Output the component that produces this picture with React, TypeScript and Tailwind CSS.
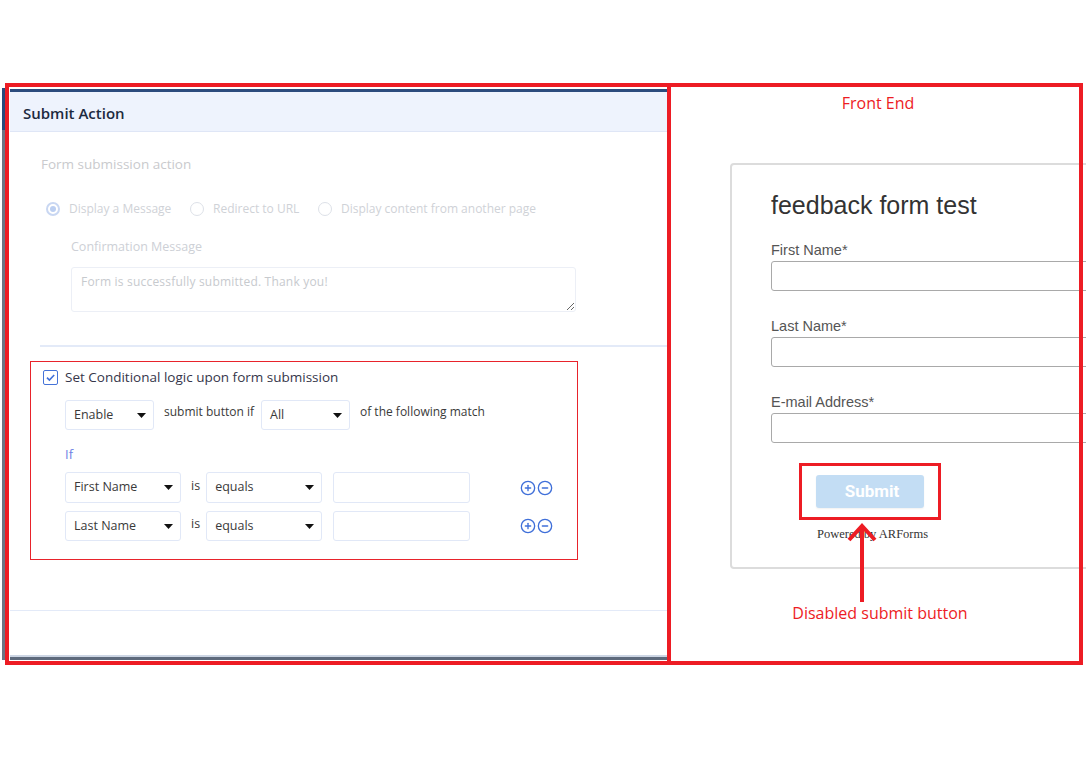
import React from 'react';
import { CirclePlus, CircleMinus } from 'lucide-react';

function Caret() {
  return (
    <svg width="9" height="5" viewBox="0 0 9 5" className="shrink-0">
      <path d="M0 0h9L4.5 5z" fill="#111" />
    </svg>
  );
}

function Select({ label, width, height }: { label: string; width: string; height: string }) {
  return (
    <div
      className={`flex items-center justify-between rounded-[3px] border border-[#e1e8f7] bg-white pl-[8px] pr-[7px] text-[12.5px] text-[#3a3a3a] ${width} ${height}`}
    >
      <span>{label}</span>
      <Caret />
    </div>
  );
}

function Radio({ checked }: { checked?: boolean }) {
  return (
    <span
      className={`flex items-center justify-center w-[14px] h-[14px] rounded-full shrink-0 ${
        checked ? 'border-2 border-[#c9d7f2]' : 'border border-[#dde1e8]'
      }`}
    >
      {checked && <span className="w-[6px] h-[6px] rounded-full bg-[#bccff1]" />}
    </span>
  );
}

function ConditionRow({ field, height }: { field: string; height: string }) {
  return (
    <div className="flex items-center">
      <Select label={field} width="w-[116px]" height={height} />
      <span className="ml-[10px] -mt-[3px] text-[12.5px] text-[#3a3a3a]">is</span>
      <div className="ml-[6px]">
        <Select label="equals" width="w-[116px]" height={height} />
      </div>
      <div className={`ml-[11px] w-[137px] rounded-[3px] border border-[#e1e8f7] bg-white ${height}`} />
      <div className="ml-[50px] flex items-center gap-[1px] text-[#3f6fd9]">
        <CirclePlus size={16} strokeWidth={2} />
        <CircleMinus size={16} strokeWidth={2} />
      </div>
    </div>
  );
}

export default function App(): React.JSX.Element {
  return (
    <div className="relative w-[1086px] h-[768px] overflow-hidden bg-white">
      <div className="mt-[83px] flex h-[582px]">
        {/* underlying admin page edge */}
        <div className="w-[10px] shrink-0 pt-[5px] pl-[2px]">
          <div className="w-[3px] h-[42px] bg-[#2b4b7d]" />
          <div className="w-[3px] h-[530px] bg-[#6c7585]" />
        </div>

        {/* Submit Action panel */}
        <div className="w-[658px] shrink-0 flex flex-col bg-white font-['Open_Sans','Noto_Sans',sans-serif]">
          <div className="h-[6px]" />
          <div className="h-[3px] bg-[#2b4b7d]" />
          <div className="h-[40px] bg-[#eef3fd] border-b border-[#dfe6f6] flex items-center pl-[13px] pt-[3px] text-[15px] font-semibold text-[#1c2a3f]">
            Submit Action
          </div>

          <div className="pl-[31px]">
            <p className="mt-[22px] text-[13.5px] leading-[20px] font-medium text-[#c9cacd]">Form submission action</p>
            <div className="mt-[25px] flex items-center h-[20px] pl-[5px] text-[12px] text-[#cfd2d7]">
              <div className="w-[144px] flex items-center">
                <Radio checked />
                <span className="ml-[9px]">Display a Message</span>
              </div>
              <div className="w-[128px] flex items-center">
                <Radio />
                <span className="ml-[9px]">Redirect to URL</span>
              </div>
              <div className="flex items-center">
                <Radio />
                <span className="ml-[9px]">Display content from another page</span>
              </div>
            </div>
            <div className="pl-[30px]">
              <p className="mt-[19px] text-[12.5px] leading-[18px] text-[#cdd0d6]">Confirmation Message</p>
              <textarea
                readOnly
                defaultValue="Form is successfully submitted. Thank you!"
                className="mt-[11px] block w-[505px] h-[45px] rounded-[3px] border border-[#eceff6] bg-white px-[9px] pt-[6px] text-[12px] leading-[16px] tracking-[0.2px] text-[#c7cace] outline-none"
              />
            </div>
          </div>

          <div className="mt-[33px] ml-[30px] h-[2px] bg-[#e3eaf8]" />

          {/* conditional logic */}
          <div className="mt-[14px] ml-[20px] w-[548px] h-[199px] border border-[#e8232b] pl-[12px] pt-[5px]">
            <div className="flex items-center h-[20px]">
              <span className="flex items-center justify-center w-[15px] h-[15px] rounded-[2px] border-[1.5px] border-[#4573d8]">
                <svg width="11" height="11" viewBox="0 0 11 11">
                  <path d="M2 5.6l2.4 2.4L9.2 3" fill="none" stroke="#3f6fd9" strokeWidth="1.6" />
                </svg>
              </span>
              <span className="ml-[7px] text-[13.5px] font-medium text-[#36364a]">Set Conditional logic upon form submission</span>
            </div>

            <div className="ml-[22px]">
              <div className="mt-[13px] flex items-start">
                <Select label="Enable" width="w-[89px]" height="h-[30px]" />
                <span className="ml-[10px] pt-[3px] text-[12px] leading-[18px] text-[#3a3a3a]">submit button if</span>
                <div className="ml-[7px]">
                  <Select label="All" width="w-[89px]" height="h-[30px]" />
                </div>
                <span className="ml-[10px] pt-[3px] text-[12px] leading-[18px] text-[#3a3a3a]">of the following match</span>
              </div>

              <p className="mt-[15px] text-[13px] leading-[18px] text-[#6f82e4]">If</p>

              <div className="mt-[9px]">
                <ConditionRow field="First Name" height="h-[31px]" />
              </div>
              <div className="mt-[8px]">
                <ConditionRow field="Last Name" height="h-[30px]" />
              </div>
            </div>
          </div>

          <div className="mt-[50px] h-px bg-[#e3eaf8]" />
          <div className="mt-[44px] h-[2px] bg-[#cdd6e4]" />
          <div className="h-[3px] bg-[#5e6a7c]" />
        </div>

        {/* Front end panel */}
        <div className="w-[418px] shrink-0 flex flex-col">
          <p className="pt-[9px] pl-[2px] text-center text-[16px] leading-[22px] text-[#ed1c24] font-['Open_Sans','Noto_Sans',sans-serif]">
            Front End
          </p>

          <div className="mt-[49px] ml-[62px] w-[420px] h-[406px] shrink-0 rounded-[4px] border-2 border-[#dcdcdc] bg-white pl-[39px] pt-[25px] font-['Liberation_Sans',Arial,sans-serif]">
            <h1 className="text-[25px] leading-[30px] text-[#333]">feedback form test</h1>

            <p className="mt-[22px] text-[14.5px] leading-[17px] text-[#555]">First Name*</p>
            <div className="mt-[2px] h-[30px] rounded-[3px] border border-[#a9a9a9]" />

            <p className="mt-[27px] text-[14.5px] leading-[17px] text-[#555]">Last Name*</p>
            <div className="mt-[2px] h-[30px] rounded-[3px] border border-[#a9a9a9]" />

            <p className="mt-[27px] text-[14.5px] leading-[17px] text-[#555]">E-mail Address*</p>
            <div className="mt-[2px] h-[30px] rounded-[3px] border border-[#a9a9a9]" />

            <div className="mt-[20px] ml-[28px] w-[142px] h-[57px] border-[3px] border-[#ed1c24] flex items-center justify-center">
              <button
                disabled
                className="w-[108px] h-[33px] rounded-[3px] bg-[#c3ddf4] pl-[4px] pt-[1px] text-[17px] font-bold text-white shadow-[0_1px_2px_rgba(0,0,0,0.06)] font-['Roboto',sans-serif]"
              >
                Submit
              </button>
            </div>

            <p className="mt-[6px] ml-[46px] text-[12.5px] leading-[16px] text-[#333] font-['Liberation_Serif',serif]">
              Powered by ARForms
            </p>
          </div>

          <p className="mt-[33px] pl-[6px] text-center text-[16px] leading-[22px] text-[#ed1c24] font-['Open_Sans','Noto_Sans',sans-serif]">
            Disabled submit button
          </p>
        </div>
      </div>

      {/* annotation frame */}
      <div className="pointer-events-none absolute left-[5px] top-[83px] w-[1078px] h-[582px] border-4 border-[#ed1c24]" />
      <div className="pointer-events-none absolute left-[667px] top-[83px] w-[4px] h-[582px] bg-[#ed1c24]" />

      {/* annotation arrow */}
      <svg className="pointer-events-none absolute left-[845px] top-[520px]" width="36" height="86" viewBox="0 0 36 86">
        <path d="M17 7V82" stroke="#ed1c24" strokeWidth="4" />
        <path d="M4 20L17 6L30 20" fill="none" stroke="#ed1c24" strokeWidth="4" />
      </svg>
    </div>
  );
}
